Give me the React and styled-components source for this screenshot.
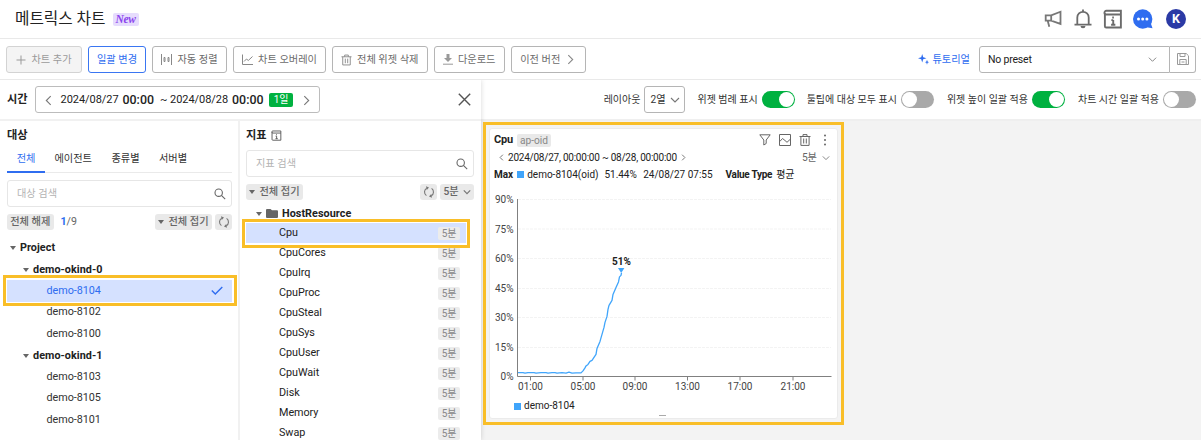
import React from "react";
import styled, { createGlobalStyle, css } from "styled-components";

const Global = createGlobalStyle`
  * { box-sizing: border-box; }
  body {
    margin: 0;
    background: #fff;
    font-family: Roboto, "Noto Sans CJK KR", sans-serif;
    font-size: 10.2px;
    line-height: 14px;
    color: #333;
    overflow: hidden;
  }
  svg { display: block; flex: none; }
`;

const Page = styled.div`
  width: 1201px;
  height: 440px;
  display: flex;
  flex-direction: column;
  overflow: hidden;
`;

/* ---------- header ---------- */
const Header = styled.header`
  height: 39px;
  flex: none;
  display: flex;
  align-items: center;
  justify-content: space-between;
  padding: 0 15px 0 15px;
  border-bottom: 1px solid #e9e9e9;
`;
const TitleGroup = styled.div`
  display: flex;
  align-items: center;
  gap: 7px;
`;
const Title = styled.h1`
  margin: 0;
  font-size: 15.7px;
  font-weight: 400;
  line-height: 20px;
  color: #222;
`;
const NewBadge = styled.span`
  width: 26px;
  height: 13px;
  border-radius: 2px;
  background: #e6dcfd;
  color: #8c46ee;
  font: italic 700 11.5px/13px "Liberation Serif", serif;
  letter-spacing: -0.4px;
  text-align: center;
`;
const HeaderIcons = styled.div`
  display: flex;
  align-items: center;
  gap: 10px;
  color: #6b6b6b;
`;
const Avatar = styled.div`
  width: 20px;
  height: 20px;
  margin-left: 3px;
  border-radius: 50%;
  background: #2b3aa5;
  color: #fff;
  font-size: 12.5px;
  font-weight: 700;
  line-height: 20px;
  text-align: center;
`;

/* ---------- toolbar ---------- */
const Toolbar = styled.div`
  height: 41px;
  flex: none;
  display: flex;
  align-items: center;
  justify-content: space-between;
  padding: 0 5px 0 6px;
  border-bottom: 1px solid #e9e9e9;
`;
const ButtonRow = styled.div`
  display: flex;
  gap: 6px;
`;
const ToolButton = styled.button`
  width: ${(p) => p.$w}px;
  height: 27px;
  padding: 1px 0 0;
  display: flex;
  align-items: center;
  justify-content: center;
  gap: ${(p) => p.$gap ?? 5}px;
  border: 1px solid #b5b5b5;
  border-radius: 3px;
  background: #fff;
  color: #6b6b6b;
  font: inherit;
  white-space: nowrap;
  ${(p) => p.$kind === "disabled" && css`background: #f4f4f4; border-color: #d3d3d3; color: #9a9a9a;`}
  ${(p) => p.$kind === "primary" && css`border-color: #3a76f2; color: #2f6df0;`}
`;
const PresetGroup = styled.div`
  display: flex;
  align-items: center;
`;
const Tutorial = styled.a`
  display: flex;
  align-items: center;
  gap: 4px;
  margin-right: 9px;
  padding-top: 1px;
  color: #2f6df0;
`;
const PresetSelect = styled.div`
  width: 191px;
  height: 27px;
  display: flex;
  align-items: center;
  justify-content: space-between;
  padding: 1px 12px 0 8px;
  border: 1px solid #b5b5b5;
  border-radius: 3px 0 0 3px;
  font-size: 10.5px;
  letter-spacing: -0.2px;
  color: #222;
`;
const SaveButton = styled.div`
  width: 26px;
  height: 27px;
  display: flex;
  align-items: center;
  justify-content: center;
  border: 1px solid #b5b5b5;
  border-left: 0;
  border-radius: 0 3px 3px 0;
`;

/* ---------- body ---------- */
const Body = styled.main`
  flex: 1;
  display: flex;
  min-height: 0;
`;
const SidePanel = styled.aside`
  position: relative;
  z-index: 1;
  width: 481px;
  flex: none;
  display: flex;
  flex-direction: column;
  background: #fff;
  box-shadow: 0 0 5px rgba(0, 0, 0, 0.16);
  clip-path: inset(0 -8px 0 0);
`;
const TimeBar = styled.div`
  height: 41px;
  flex: none;
  display: flex;
  align-items: center;
  padding: 0 10px 0 7px;
  border-bottom: 2px solid #f1f1f1;
`;
const SectionTitle = styled.h2`
  margin: 0;
  font-size: 11.2px;
  font-weight: 700;
  line-height: 16px;
  color: #222;
`;
const DateBox = styled.div`
  width: 285px;
  height: 27px;
  margin: 0 auto 0 7px;
  padding: 1px 7px 0;
  display: flex;
  align-items: center;
  border: 1px solid #bcbcbc;
  border-radius: 3px;
  font-size: 11px;
  color: #222;
  white-space: pre;
`;
const DateText = styled.span`
  letter-spacing: -0.06px;
  margin-left: ${(p) => p.$ml}px;
`;
const ClockText = styled.span`
  width: 33px;
  font-size: 12.4px;
  font-weight: 500;
  margin-left: 4px;
`;
const DayBadge = styled.span`
  width: 24px;
  height: 14px;
  flex: none;
  margin: 0 auto 0 4px;
  border-radius: 2px;
  background: #00b140;
  color: #fff;
  font-size: 10px;
  line-height: 14px;
  text-align: center;
`;
const Columns = styled.div`
  flex: 1;
  display: flex;
  min-height: 0;
`;
const TargetColumn = styled.section`
  width: 240px;
  flex: none;
  padding: 6px 6px 0 7px;
  border-right: 2px solid #f1f1f1;
`;
const MetricColumn = styled.section`
  width: 241px;
  flex: none;
  padding: 6px 7px 0 6px;
`;
const SectionHead = styled.div`
  display: flex;
  align-items: center;
  gap: 4px;
  height: 16px;
  padding-top: 1px;
  color: #555;
`;
const Tabs = styled.nav`
  display: flex;
  height: 30px;
  border-bottom: 1px solid #eaeaea;
`;
const Tab = styled.span`
  width: ${(p) => p.$w}px;
  height: 30px;
  padding-top: 9px;
  text-align: center;
  line-height: 14px;
  border-bottom: 2px solid ${(p) => (p.$active ? "#2f6df0" : "transparent")};
  color: ${(p) => (p.$active ? "#2f6df0" : "#333")};
`;
const SearchBox = styled.div`
  height: 27px;
  margin-top: 7px;
  padding: 0 5px 0 9px;
  display: flex;
  align-items: center;
  justify-content: space-between;
  border: 1px solid #e6e6e6;
  border-radius: 3px;
  color: #b3b3b3;
`;
const ChipRow = styled.div`
  display: flex;
  align-items: center;
  margin-top: 7px;
  height: 16px;
`;
const Chip = styled.span`
  width: ${(p) => p.$w}px;
  height: 16px;
  display: flex;
  align-items: center;
  justify-content: center;
  gap: 4px;
  border-radius: 3px;
  background: #e9e9e9;
  color: #666;
  font-weight: 500;
  white-space: nowrap;
  & + & { margin-left: 3px; }
`;
const Count = styled.span`
  margin: 0 auto 0 7px;
  font-size: 10.6px;
  color: #666;
  b { color: #2f6df0; font-weight: 700; }
`;
const Push = styled.span`
  flex: 1;
`;
const Tree = styled.div`
  margin-top: ${(p) => p.$top}px;
  color: #333;
`;
const TreeRow = styled.div`
  position: relative;
  height: 21.5px;
  display: flex;
  align-items: center;
  gap: 4px;
  padding: ${(p) => (p.$bold ? 1 : 0)}px 9px 0 ${(p) => p.$indent}px;
  font-size: 10.8px;
  letter-spacing: ${(p) => (p.$bold ? 0.05 : -0.04)}px;
  font-weight: ${(p) => (p.$bold ? 700 : 400)};
  color: ${(p) => (p.$active ? "#2f6df0" : p.$bold ? "#222" : "#333")};
  background: ${(p) => (p.$active ? "#d5e1ff" : "transparent")};
`;
const MetricRow = styled(TreeRow)`
  height: 20px;
  margin-right: 8px;
  padding-right: 6px;
  justify-content: ${(p) => (p.$bold ? "flex-start" : "space-between")};
  color: #222;
`;
const Interval = styled.span`
  width: 22px;
  height: 13px;
  margin-top: 1px;
  border-radius: 2px;
  background: #ececec;
  color: #888;
  font-size: 10px;
  line-height: 13px;
  text-align: center;
`;
/* Callout frame laid over the element it emphasises */
const Callout = styled.div`
  position: absolute;
  inset: ${(p) => p.$inset};
  border: 3px solid #f9be28;
  pointer-events: none;
  z-index: 3;
`;

/* ---------- chart area ---------- */
const Dashboard = styled.section`
  flex: 1;
  display: flex;
  flex-direction: column;
  background: #f3f3f3;
`;
const OptionBar = styled.div`
  height: 41px;
  flex: none;
  display: flex;
  align-items: center;
  justify-content: flex-end;
  padding: 0 5px 0 0;
  border-bottom: 2px solid #efefef;
  background: #fff;
`;
const OptionLabel = styled.span`
  margin: 0 4px 0 ${(p) => p.$ml}px;
  white-space: nowrap;
  font-size: 10px;
`;
const LayoutSelect = styled.div`
  width: 41px;
  height: 27px;
  display: flex;
  align-items: center;
  justify-content: center;
  gap: 4px;
  padding-top: 1px;
  border: 1px solid #b5b5b5;
  border-radius: 3px;
`;
const Switch = styled.span`
  width: 33px;
  height: 17px;
  padding: 1px;
  display: flex;
  justify-content: ${(p) => (p.$on ? "flex-end" : "flex-start")};
  border-radius: 9px;
  background: ${(p) => (p.$on ? "#00b140" : "#a9a9a9")};
  &::after {
    content: "";
    width: 15px;
    height: 15px;
    border-radius: 50%;
    background: #fff;
  }
`;
const Widget = styled.article`
  position: relative;
  width: 349px;
  height: 291px;
  margin: 7px 0 0 8px;
  padding: 3px 6px 0 4px;
  border: 1px solid #ebebeb;
  border-radius: 3px;
  background: #fff;
`;
const WidgetLine = styled.div`
  height: ${(p) => p.$h}px;
  padding-top: ${(p) => p.$pt ?? 0}px;
  padding-right: ${(p) => p.$pr ?? 0}px;
  display: flex;
  align-items: center;
  color: #333;
  white-space: pre;
`;
const WidgetTitle = styled.span`
  font-size: 11px;
  font-weight: 700;
  letter-spacing: -0.2px;
  color: #222;
`;
const Tag = styled.span`
  margin: 0 auto 0 4px;
  width: 34px;
  height: 13px;
  border-radius: 2px;
  background: #e9e9e9;
  color: #888;
  font-size: 10.2px;
  line-height: 13px;
  text-align: center;
`;
const WidgetActions = styled.div`
  display: flex;
  align-items: center;
  gap: 8px;
`;
const Range = styled.span`
  margin: 0 3px 0 3px;
  font-size: 10px;
  letter-spacing: -0.23px;
  color: #222;
`;
const Unit = styled.span`
  margin: 0 5px 0 auto;
  color: #666;
`;
const Stat = styled.span`
  margin-left: ${(p) => p.$ml ?? 0}px;
  font-size: 10px;
  letter-spacing: ${(p) => p.$ls ?? 0}px;
  font-weight: ${(p) => (p.$bold ? 700 : 400)};
  color: #222;
`;
const Swatch = styled.i`
  width: 7px;
  height: 7px;
  margin-left: ${(p) => p.$ml ?? 0}px;
  background: #40a5fb;
`;
const ChartFrame = styled.div`
  margin-top: 7px;
`;
const Legend = styled.div`
  display: flex;
  align-items: center;
  height: 14px;
  margin: 4px 0 0 20px;
`;
const ResizeGrip = styled.div`
  width: 7px;
  height: 1px;
  margin: 2px auto 0;
  background: #aaa;
`;

/* ---------- icons ---------- */
const Icon = ({ w = 14, h, vb, sw = 1.3, color = "currentColor", children }) => (
  <svg width={w} height={h ?? w} viewBox={vb ?? `0 0 ${w} ${h ?? w}`} fill="none" stroke={color} strokeWidth={sw}>
    {children}
  </svg>
);
const Chevron = ({ dir = "down", size = 9, color = "#777", sw = 1.1 }) => {
  const d = { down: "M1 3l4 4 4-4", left: "M7 1L3 5l4 4", right: "M3 1l4 4-4 4" }[dir];
  return <Icon w={size} vb="0 0 10 10" sw={sw} color={color}><path d={d} /></Icon>;
};
const Caret = () => (
  <svg width="6" height="4" viewBox="0 0 6 4"><path d="M0 0h6L3 4z" fill="#666" /></svg>
);
const Search = () => (
  <Icon w={12} color="#666" sw={1.1}><circle cx="4.7" cy="4.7" r="3.7" /><path d="M7.4 7.4l3.8 3.8" /></Icon>
);
const Refresh = () => (
  <Icon w={12} color="#777" sw={1.1}>
    <path d="M3.400 9.600A4.400 4.400 0 0 1 3.700 2.200M8.600 2.400A4.400 4.400 0 0 1 8.300 9.800" />
    <path d="M3 .2l3 1.300-2.200 2.500zM9 11.800l-3-1.300 2.200-2.500z" fill="#777" stroke="none" />
  </Icon>
);
const Trash = ({ w = 12, color = "#666" }) => (
  <Icon w={w} h={12} vb="0 0 12 12" color={color} sw={1}>
    <path d="M.5 2.500h11M4 2.500V.6h4v1.900M1.900 2.500v8.900h8.200V2.500M4.700 4.500v5M7.300 4.500v5" />
  </Icon>
);
const GuideBook = ({ size, sw }) => (
  <Icon w={size} vb="0 0 18 18" sw={sw}>
    <path d="M1.700 3.500v12a1.200 1.200 0 0 0 1.200 1.200h13.200V5H3a1.500 1.500 0 0 1 0-3.400h13.100V5" />
    <path d="M9.200 10v4.400M7.500 10h1.700M7.300 14.200h3.800M8.300 7.700h1.500" />
  </Icon>
);

/* ---------- data ---------- */
const targets = [
  { label: "Project", indent: 3, group: true },
  { label: "demo-okind-0", indent: 16, group: true },
  { label: "demo-8104", indent: 39.5, active: true },
  { label: "demo-8102", indent: 39.5 },
  { label: "demo-8100", indent: 39.5 },
  { label: "demo-okind-1", indent: 16, group: true },
  { label: "demo-8103", indent: 39.5 },
  { label: "demo-8105", indent: 39.5 },
  { label: "demo-8101", indent: 39.5 },
];
const metrics = ["Cpu", "CpuCores", "CpuIrq", "CpuProc", "CpuSteal", "CpuSys", "CpuUser", "CpuWait", "Disk", "Memory", "Swap"];
const yTicks = [
  ["90%", 9.5], ["75%", 39], ["60%", 68.5], ["45%", 98.5], ["30%", 127.5], ["15%", 157.5], ["0%", 186.5],
];
const xTicks = [
  ["01:00", 36.5], ["05:00", 89], ["09:00", 141], ["13:00", 193.5], ["17:00", 246], ["21:00", 299],
];
const Axis = styled.text`
  font-size: 10px;
  fill: #444;
`;
const PeakLabel = styled.text`
  font-size: 10px;
  font-weight: 700;
  fill: #222;
`;

const Chart = () => (
  <svg width="339" height="205" viewBox="0 0 339 205">
    {yTicks.map(([label, y]) => (
      <g key={label}>
        <Axis x="19.5" y={y + 3.6} textAnchor="end">{label}</Axis>
        <path d={`M24 ${y}H337`} stroke="#f3f3f3" strokeDasharray="3 1" />
      </g>
    ))}
    <path d="M23.500 9V186.500H337.500" fill="none" stroke="#808080" />
    {xTicks.map(([label, x]) => (
      <g key={label}>
        <path d={`M${x} 187v3.5`} stroke="#808080" />
        <Axis x={x} y="199.5" textAnchor="middle">{label}</Axis>
      </g>
    ))}
    <path
      d="M24 182.600h5l2 .6 3-.6h6l2 .6 5-.6h5l2 .5 4-.5h3l2 .6 5-.6 4 .6 3-1 3 .9 4-.2h5l2-2 2-3 1-2 2-1.500 2-3 2-1 3-4.500 1-1.500 1-6 3-7 2-7 2-7 1-5 2-6 1-7 1-4 3-5 1-6 3-7 2.500-5.500 1-5 1.500-1.500 .5-2.500"
      fill="none" stroke="#40a5fb" strokeWidth="1.300" strokeLinejoin="round"
    />
    <path d="M124 78h6.400l-3.200 5z" fill="#40a5fb" />
    <PeakLabel x="127.5" y="74.5" textAnchor="middle">51%</PeakLabel>
  </svg>
);

export default function App() {
  return (
    <>
      <Global />
      <Page>
        <Header>
          <TitleGroup>
            <Title>메트릭스 차트</Title>
            <NewBadge>New</NewBadge>
          </TitleGroup>
          <HeaderIcons>
            <Icon w={20} color="#777" sw={1.8}>
              <path d="M2.700 6.300h5.500L17.500 2.700v12.200l-9.300-3.200H2.700zM8.200 6.300v5.400M4.700 11.700l1.600 6" />
            </Icon>
            <Icon w={20} color="#6b6b6b" sw={1.8}>
              <path d="M1.500 15.600h17M4.300 15.600V8.500a5.700 5.700 0 0 1 11.400 0v7.100M10 2.800V.5" />
              <path d="M7.500 17h5a2.500 2.300 0 0 1-5 0z" fill="#6b6b6b" stroke="none" />
            </Icon>
            <GuideBook size={20} sw={1.7} />
            <svg width="20" height="20" viewBox="0 0 20 20">
              <circle cx="9.700" cy="10" r="9.700" fill="#2f6df0" />
              <path d="M12 18l7.500 1.300-1.700-5z" fill="#2f6df0" />
              <circle cx="5.500" cy="10" r="1.500" fill="#fff" /><circle cx="9.700" cy="10" r="1.500" fill="#fff" /><circle cx="13.900" cy="10" r="1.500" fill="#fff" />
            </svg>
            <Avatar>K</Avatar>
          </HeaderIcons>
        </Header>

        <Toolbar>
          <ButtonRow>
            <ToolButton $w={76} $kind="disabled">
              <Icon w={10} color="#999" sw={1}><path d="M5 .5v9M.5 5h9" /></Icon>차트 추가
            </ToolButton>
            <ToolButton $w={58} $kind="primary">일괄 변경</ToolButton>
            <ToolButton $w={75}>
              <Icon w={11} color="#888" sw={1}><path d="M.5 0v11M10.500 0v11M3 3.500h1v4H3zM7 3.500h1v4H7z" /></Icon>자동 정렬
            </ToolButton>
            <ToolButton $w={93}>
              <Icon w={11} color="#888" sw={1}><path d="M.5.5v10H11M2 7.500l2.500-2.500 1.800 1.500L10.500 2.500" /></Icon>차트 오버레이
            </ToolButton>
            <ToolButton $w={95.5}><Trash w={11} color="#888" />전체 위젯 삭제</ToolButton>
            <ToolButton $w={71.5}>
              <Icon w={10} h={11} color="#999" sw={1}>
                <path d="M3.500 0h3v4H9L5 8 1 4h2.500z" fill="#999" stroke="none" /><path d="M0 10.200h10" />
              </Icon>다운로드
            </ToolButton>
            <ToolButton $w={74.5} $gap={5}>이전 버전<Chevron dir="right" size={11} color="#888" sw={1} /></ToolButton>
          </ButtonRow>
          <PresetGroup>
            <Tutorial>
              <svg width="11" height="11" viewBox="0 0 11 11" fill="#2f6df0">
                <path d="M4.200 0l1 3.200 3.300 1-3.300 1-1 3.300-1-3.300-3.200-1 3.200-1zM9 5.800l.6 1.800 1.400.6-1.400.6L9 10.800l-.6-2L7 8.200l1.400-.6z" />
              </svg>
              튜토리얼
            </Tutorial>
            <PresetSelect>No preset<Chevron color="#888" /></PresetSelect>
            <SaveButton>
              <Icon w={12} color="#999" sw={1}><path d="M.5.5h8.700l2.300 2.300v8.700H.5zM3 .5v3h5v-3M2.800 11.500V6.500h6.400v5M4.500 9h3" /></Icon>
            </SaveButton>
          </PresetGroup>
        </Toolbar>

        <Body>
          <SidePanel>
            <TimeBar>
              <SectionTitle>시간</SectionTitle>
              <DateBox>
                <Chevron dir="left" size={11} sw={1} />
                <DateText $ml={7}>2024/08/27</DateText>
                <ClockText>00:00</ClockText>
                <DateText $ml={4.5}>~ 2024/08/28</DateText>
                <ClockText>00:00</ClockText>
                <DayBadge>1일</DayBadge>
                <Chevron dir="right" size={11} sw={1} />
              </DateBox>
              <Icon w={13} color="#555" sw={1.4}><path d="M.8.8l11.400 11.400M12.200.8L.8 12.200" /></Icon>
            </TimeBar>
            <Columns>
              <TargetColumn>
                <SectionHead><SectionTitle>대상</SectionTitle></SectionHead>
                <Tabs>
                  <Tab $w={38} $active>전체</Tab>
                  <Tab $w={56.5}>에이전트</Tab>
                  <Tab $w={48}>종류별</Tab>
                  <Tab $w={47}>서버별</Tab>
                </Tabs>
                <SearchBox>대상 검색<Search /></SearchBox>
                <ChipRow>
                  <Chip $w={46.5}>전체 해제</Chip>
                  <Count><b>1</b>/9</Count>
                  <Chip $w={57}><Caret />전체 접기</Chip>
                  <Chip $w={17}><Refresh /></Chip>
                </ChipRow>
                <Tree $top={7}>
                  {targets.map((t) => (
                    <TreeRow key={t.label} $indent={t.indent} $bold={t.group} $active={t.active}>
                      {t.group && <Caret />}
                      {t.label}
                      {t.active && (
                        <>
                          <Push />
                          <Icon w={12} h={9} color="#2f6df0" sw={1.4}><path d="M.8 4.500l3.500 3.500L11.300 1" /></Icon>
                          <Callout $inset="-5px -5px -4px -4px" />
                        </>
                      )}
                    </TreeRow>
                  ))}
                </Tree>
              </TargetColumn>
              <MetricColumn>
                <SectionHead><SectionTitle>지표</SectionTitle><GuideBook size={11} sw={1.5} /></SectionHead>
                <SearchBox>지표 검색<Search /></SearchBox>
                <ChipRow>
                  <Chip $w={57}><Caret />전체 접기</Chip>
                  <Push />
                  <Chip $w={17}><Refresh /></Chip>
                  <Chip $w={34}>5분<Chevron size={8} sw={1.5} /></Chip>
                </ChipRow>
                <Tree $top={3}>
                  <MetricRow $indent={10} $bold>
                    <Caret />
                    <svg width="12" height="9" viewBox="0 0 12 9"><path d="M0 1a1 1 0 0 1 1-1h3.500L6 1.300h5a1 1 0 0 1 1 1V8a1 1 0 0 1-1 1H1a1 1 0 0 1-1-1z" fill="#666" /></svg>
                    HostResource
                  </MetricRow>
                  {metrics.map((m, i) => (
                    <MetricRow key={m} $indent={33} $active={i === 0}>
                      {m}
                      <Interval>5분</Interval>
                      {i === 0 && <Callout $inset="-4px -4px -5px -4px" />}
                    </MetricRow>
                  ))}
                </Tree>
              </MetricColumn>
            </Columns>
          </SidePanel>

          <Dashboard>
            <OptionBar>
              <OptionLabel $ml={0}>레이아웃</OptionLabel>
              <LayoutSelect>2열<Chevron size={10} /></LayoutSelect>
              <OptionLabel $ml={12}>위젯 범례 표시</OptionLabel><Switch $on />
              <OptionLabel $ml={12}>툴팁에 대상 모두 표시</OptionLabel><Switch />
              <OptionLabel $ml={13}>위젯 높이 일괄 적용</OptionLabel><Switch $on />
              <OptionLabel $ml={13}>차트 시간 일괄 적용</OptionLabel><Switch />
            </OptionBar>
            <Widget>
              <WidgetLine $h={16}>
                <WidgetTitle>Cpu</WidgetTitle>
                <Tag>ap-oid</Tag>
                <WidgetActions>
                  <Icon w={12} color="#666" sw={1}><path d="M.8.8h10.400L7.200 6v3.500L4.800 11V6z" /></Icon>
                  <Icon w={12} color="#666" sw={1}><path d="M.5.5h11v11H.5zM.8 7.500L3.500 4.500 6 6.500l2 1.800 3.200-3" /></Icon>
                  <Trash />
                  <svg width="12" height="12" viewBox="0 0 12 12" fill="#666"><circle cx="6" cy="1.500" r="1" /><circle cx="6" cy="6" r="1" /><circle cx="6" cy="10.500" r="1" /></svg>
                </WidgetActions>
              </WidgetLine>
              <WidgetLine $h={18} $pt={1} $pr={1}>
                <Stat $ml={4} /><Chevron dir="left" size={7} sw={1.4} />
                <Range>2024/08/27, 00:00:00 ~ 08/28, 00:00:00</Range>
                <Chevron dir="right" size={7} sw={1.4} />
                <Unit>5분</Unit>
                <Chevron size={8} />
              </WidgetLine>
              <WidgetLine $h={17}>
                <Stat $bold>Max</Stat>
                <Swatch $ml={4} />
                <Stat $ml={3}>demo-8104(oid)</Stat>
                <Stat $ml={6} $ls={-0.05}>51.44%</Stat>
                <Stat $ml={6.5}>24/08/27 07:55</Stat>
                <Stat $ml={13} $bold $ls={-0.28}>Value Type</Stat>
                <Stat $ml={4}>평균</Stat>
              </WidgetLine>
              <ChartFrame><Chart /></ChartFrame>
              <Legend>
                <Swatch />
                <Stat $ml={3}>demo-8104</Stat>
              </Legend>
              <ResizeGrip />
              <Callout $inset="-7px -7px -7px -7px" />
            </Widget>
          </Dashboard>
        </Body>
      </Page>
    </>
  );
}
